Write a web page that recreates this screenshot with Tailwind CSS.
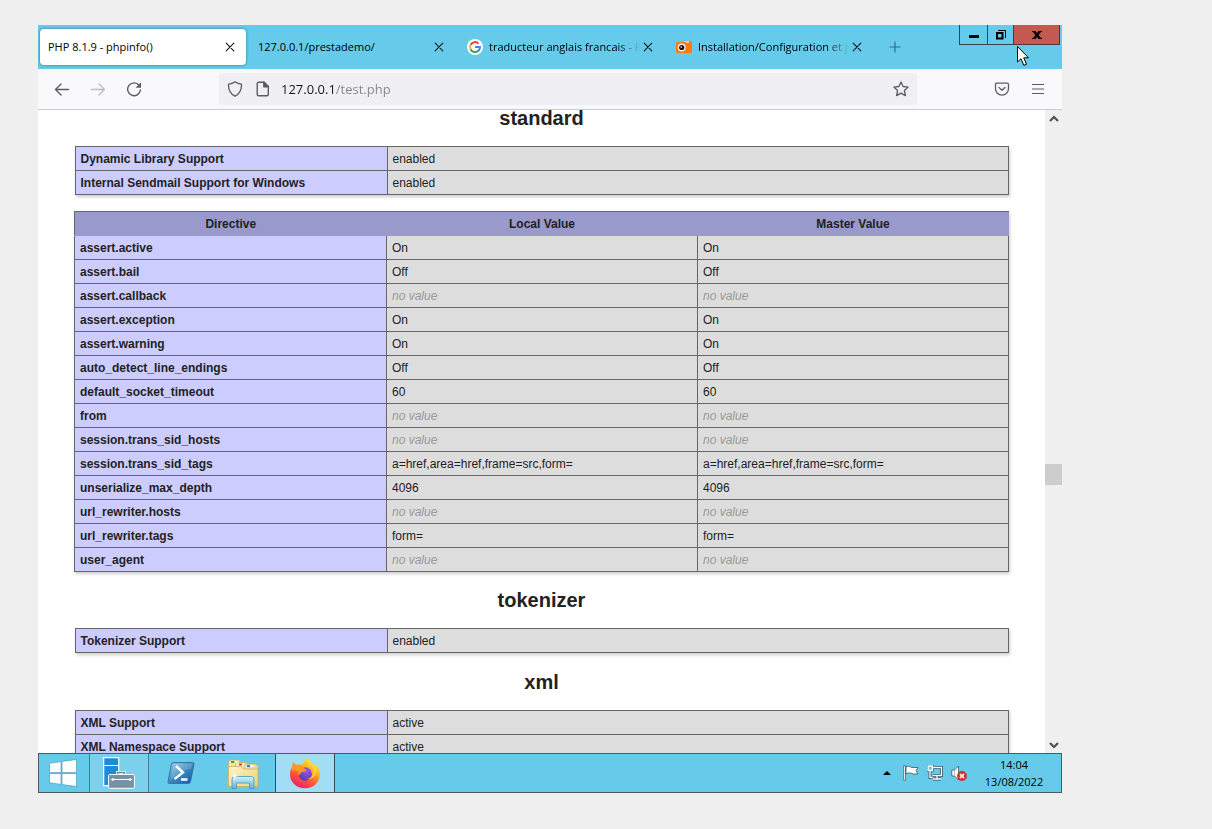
<!DOCTYPE html>
<html lang="en">
<head>
<meta charset="utf-8">
<title>PHP 8.1.9 - phpinfo()</title>
<script src="https://cdn.jsdelivr.net/npm/@tailwindcss/browser@4"></script>
</head>
<body class="bg-[#efefef] font-['Open_Sans',sans-serif]">
<div class="h-screen pl-[38px] pr-[150px] pt-[25px] pb-9">
<div class="relative flex h-full flex-col overflow-hidden bg-white">

  <!-- Tab strip -->
  <header class="flex h-11 shrink-0 items-start bg-[#66caea] pl-0.5 text-[11px] text-black">
    <div class="flex gap-1 pt-1" role="tablist">
      <div class="flex h-9 w-[206px] items-center rounded bg-white px-2 shadow-[0_0_3px_rgba(0,0,0,0.45)]">
        <button role="tab" aria-selected="true" class="min-w-0 flex-1 overflow-hidden whitespace-nowrap text-left">PHP 8.1.9 - phpinfo()</button>
        <button aria-label="Close tab" class="flex size-4 items-center justify-center"><svg class="size-2.5" viewBox="0 0 10 10" stroke="#15141a" stroke-width="1.1" stroke-linecap="round"><path d="M1.200 1.200l7.600 7.600M8.800 1.200l-7.600 7.600"/></svg></button>
      </div>
      <div class="flex h-9 w-[205px] items-center px-2">
        <button role="tab" class="min-w-0 flex-1 overflow-hidden whitespace-nowrap text-left">127.0.0.1/prestademo/</button>
        <button aria-label="Close tab" class="flex size-4 items-center justify-center"><svg class="size-2.5" viewBox="0 0 10 10" stroke="#15141a" stroke-width="1.1" stroke-linecap="round"><path d="M1.200 1.200l7.600 7.600M8.800 1.200l-7.600 7.600"/></svg></button>
      </div>
      <div class="flex h-9 w-[205px] items-center px-2">
        <svg class="mr-1.5 size-4 shrink-0" viewBox="0 0 16 16"><circle cx="8" cy="8" r="8" fill="#fff"/><g fill="none" stroke-width="2"><path d="M11.6 4.6A5 5 0 0 0 3.6 5.8" stroke="#ea4335"/><path d="M3.6 5.7a5 5 0 0 0 0 4.7" stroke="#fbbc05"/><path d="M3.5 10.2a5 5 0 0 0 7.8 1.6" stroke="#34a853"/><path d="M8 8h5a5 5 0 0 1-1.8 3.9" stroke="#4285f4"/></g></svg>
        <button role="tab" class="min-w-0 flex-1 overflow-hidden whitespace-nowrap text-left mask-r-from-85%">traducteur anglais francais - Recherche Google</button>
        <button aria-label="Close tab" class="flex size-4 items-center justify-center"><svg class="size-2.5" viewBox="0 0 10 10" stroke="#15141a" stroke-width="1.1" stroke-linecap="round"><path d="M1.200 1.200l7.600 7.600M8.800 1.200l-7.600 7.600"/></svg></button>
      </div>
      <div class="flex h-9 w-[205px] items-center px-2">
        <svg class="mr-1.5 size-4 shrink-0" viewBox="0 0 16 16"><path d="M1.500 3H9l.8-1h5l.7 1 .5 1v8.500q0 1.500-1.500 1.500h-13Q0 14 0 12.500v-8Q0 3 1.500 3z" fill="#ff7a0a"/><path d="M9.500 3h3.500" stroke="#fff" stroke-width="1.200"/><circle cx="5.700" cy="8.500" r="4" fill="#f3efe9"/><circle cx="5.700" cy="8.500" r="2.600" fill="#151515"/><circle cx="5.200" cy="8" r=".8" fill="#fff"/></svg>
        <button role="tab" class="min-w-0 flex-1 overflow-hidden whitespace-nowrap text-left mask-r-from-85%">Installation/Configuration et jeu</button>
        <button aria-label="Close tab" class="flex size-4 items-center justify-center"><svg class="size-2.5" viewBox="0 0 10 10" stroke="#15141a" stroke-width="1.1" stroke-linecap="round"><path d="M1.200 1.200l7.600 7.600M8.800 1.200l-7.600 7.600"/></svg></button>
      </div>
      <button aria-label="New tab" class="flex h-9 w-9 items-center justify-center"><svg class="size-3" viewBox="0 0 12 12" stroke="#3d6a7c" stroke-width="1.2"><path d="M6 .5v11M.5 6h11"/></svg></button>
    </div>
    <div class="ml-auto mr-0.5 flex">
      <button aria-label="Minimize" class="flex h-5 w-[29px] items-center justify-center border border-t-0 border-[#3a4246]"><svg class="h-5 w-3" viewBox="0 0 12 20"><path d="M1 10h10v3H1z"/></svg></button>
      <button aria-label="Restore" class="-ml-px flex h-5 w-[27px] items-center justify-center border border-t-0 border-[#3a4246]"><svg class="size-3" viewBox="0 0 12 12" fill="none" stroke="#000"><path d="M2 4h5.500v5.500H2z" stroke-width="2"/><path d="M3 1.500h7.500V9"/></svg></button>
      <button aria-label="Close" class="-ml-px flex h-5 w-[47px] items-center justify-center border border-t-0 border-[#5a3532] bg-[#c35a50]"><svg class="h-2 w-2.5" viewBox="0 0 10 8"><path d="M0 0h3.500L5 2l1.500-2H10v1H9L6.500 4 9 7h1v1H6.500L5 6 3.500 8H0V7h1l2.500-3L1 1H0z"/></svg></button>
    </div>
  </header>

  <!-- Navigation bar -->
  <nav class="flex h-[41px] shrink-0 items-center border-b border-[#cccccc] bg-[#f9f9fb] px-1.5">
    <button aria-label="Back" class="flex size-9 items-center justify-center"><svg class="size-4" viewBox="0 0 16 16" fill="none" stroke="#5b5b66" stroke-width="1.4" stroke-linecap="round" stroke-linejoin="round"><path d="M14.500 8.500H1.500M7 3L1.500 8.500 7 14"/></svg></button>
    <button aria-label="Forward" class="flex size-9 items-center justify-center"><svg class="size-4" viewBox="0 0 16 16" fill="none" stroke="#bdbdc2" stroke-width="1.4" stroke-linecap="round" stroke-linejoin="round"><path d="M1.500 8.500h13M9 3l5.500 5.500L9 14"/></svg></button>
    <button aria-label="Reload" class="flex size-9 items-center justify-center"><svg class="size-4" viewBox="0 0 16 16" fill="none" stroke="#5b5b66" stroke-width="1.400" stroke-linecap="round"><path d="M13.200 4.500A6.400 6.400 0 1 0 14.400 9"/><path d="M15 1.300v5.400H9.600z" fill="#5b5b66" stroke="none"/></svg></button>
    <div class="mx-[67px] flex h-8 flex-1 items-center rounded bg-[#f0f0f4] px-2">
      <svg class="size-4 shrink-0" viewBox="0 0 16 16" fill="none" stroke="#5b5b66" stroke-width="1.3" stroke-linejoin="round"><path d="M8 .8c1.800 1.500 4 2.200 6.500 2.400.2 5.300-1.500 9.500-6.500 12C3 12.700 1.300 8.500 1.500 3.200 4 3 6.200 2.300 8 .8z"/></svg>
      <svg class="ml-3 size-4 shrink-0" viewBox="0 0 16 16" fill="none" stroke="#5b5b66" stroke-width="1.400" stroke-linejoin="round"><path d="M3.700 1.200H9l4.300 4.300v7.800a1.500 1.500 0 0 1-1.500 1.500H3.700a1.500 1.500 0 0 1-1.500-1.500V2.700a1.500 1.500 0 0 1 1.500-1.500z"/><path d="M8.800 1l4.700 4.700H8.800z" fill="#5b5b66"/></svg>
      <input aria-label="Address" value="127.0.0.1/test.php" class="ml-2.5 min-w-0 flex-1 bg-linear-to-r from-[#15141a] from-[55px] to-[#85858c] to-[55px] bg-clip-text pt-0.5 text-[13px] text-transparent outline-none">
      <button aria-label="Bookmark" class="flex size-4 items-center justify-center"><svg class="size-4" viewBox="0 0 16 16" fill="none" stroke="#5b5b66" stroke-width="1.300" stroke-linejoin="round"><path d="M8 .9l2.100 4.600 5 .6-3.700 3.400 1 5.100L8 12.100l-4.400 2.500 1-5.100L.9 6.100l5-.6z"/></svg></button>
    </div>
    <button aria-label="Save to Pocket" class="flex size-9 items-center justify-center"><svg class="size-4" viewBox="0 0 16 16" fill="none" stroke="#5b5b66" stroke-width="1.300" stroke-linecap="round" stroke-linejoin="round"><path d="M2.800 2.200h10.400q1.300 0 1.300 1.300v4.200a6.500 6.500 0 0 1-13 0V3.500q0-1.300 1.300-1.300z"/><path d="M5 6.500l3 2.700 3-2.700"/></svg></button>
    <button aria-label="Menu" class="flex size-9 items-center justify-center"><svg class="size-4" viewBox="0 0 16 16" stroke="#5b5b66" stroke-width="1.200"><path d="M2 3.500h12M2 8h12M2 12.500h12"/></svg></button>
  </nav>

  <!-- Page and scrollbar -->
  <div class="flex min-h-0 flex-1">
    <main class="min-w-0 flex-1 overflow-hidden px-9 font-['Liberation_Sans',Arial,sans-serif] text-[#222222] [&_h2]:text-center [&_h2]:text-xl [&_h2]:leading-6 [&_h2]:font-bold [&_table]:mx-auto [&_table]:w-[934px] [&_table]:max-w-full [&_table]:table-fixed [&_table]:border-collapse [&_table]:text-xs [&_table]:leading-[15px] [&_table]:shadow-[1px_2px_3px_rgba(0,0,0,0.2)] [&_td]:border [&_td]:border-[#666666] [&_td]:bg-[#dddddd] [&_td]:px-[5px] [&_td]:pt-[5px] [&_td]:pb-[3px] [&_tbody_th]:w-[312px] [&_tbody_th]:border [&_tbody_th]:border-[#666666] [&_tbody_th]:bg-[#ccccff] [&_tbody_th]:px-[5px] [&_tbody_th]:pt-[5px] [&_tbody_th]:pb-[3px] [&_tbody_th]:text-left [&_i]:text-[#999999]">
      <h2 class="-mt-1 mb-4">standard</h2>
      <table>
        <tbody>
          <tr><th scope="row">Dynamic Library Support</th><td>enabled</td></tr>
          <tr><th scope="row">Internal Sendmail Support for Windows</th><td>enabled</td></tr>
        </tbody>
      </table>
      <table class="mt-4 [&_thead_th]:w-[311px] [&_thead_th]:border-y [&_thead_th]:border-[#9999cc] [&_thead_th]:border-t-[#666666] [&_thead_th]:bg-[#9999cc] [&_thead_th]:px-[5px] [&_thead_th]:pt-[5px] [&_thead_th]:pb-[3px] [&_thead_th:first-child]:w-[312px] [&_thead_th:first-child]:border-l [&_thead_th:first-child]:border-l-[#666666]">
        <thead>
          <tr><th scope="col">Directive</th><th scope="col">Local Value</th><th scope="col">Master Value</th></tr>
        </thead>
        <tbody>
          <tr><th scope="row">assert.active</th><td>On</td><td>On</td></tr>
          <tr><th scope="row">assert.bail</th><td>Off</td><td>Off</td></tr>
          <tr><th scope="row">assert.callback</th><td><i>no value</i></td><td><i>no value</i></td></tr>
          <tr><th scope="row">assert.exception</th><td>On</td><td>On</td></tr>
          <tr><th scope="row">assert.warning</th><td>On</td><td>On</td></tr>
          <tr><th scope="row">auto_detect_line_endings</th><td>Off</td><td>Off</td></tr>
          <tr><th scope="row">default_socket_timeout</th><td>60</td><td>60</td></tr>
          <tr><th scope="row">from</th><td><i>no value</i></td><td><i>no value</i></td></tr>
          <tr><th scope="row">session.trans_sid_hosts</th><td><i>no value</i></td><td><i>no value</i></td></tr>
          <tr><th scope="row">session.trans_sid_tags</th><td>a=href,area=href,frame=src,form=</td><td>a=href,area=href,frame=src,form=</td></tr>
          <tr><th scope="row">unserialize_max_depth</th><td>4096</td><td>4096</td></tr>
          <tr><th scope="row">url_rewriter.hosts</th><td><i>no value</i></td><td><i>no value</i></td></tr>
          <tr><th scope="row">url_rewriter.tags</th><td>form=</td><td>form=</td></tr>
          <tr><th scope="row">user_agent</th><td><i>no value</i></td><td><i>no value</i></td></tr>
        </tbody>
      </table>
      <h2 class="my-4">tokenizer</h2>
      <table>
        <tbody>
          <tr><th scope="row">Tokenizer Support</th><td>enabled</td></tr>
        </tbody>
      </table>
      <h2 class="mt-[17px] mb-4">xml</h2>
      <table>
        <tbody>
          <tr><th scope="row">XML Support</th><td>active</td></tr>
          <tr><th scope="row">XML Namespace Support</th><td>active</td></tr>
        </tbody>
      </table>
    </main>
    <div class="flex w-[17px] shrink-0 flex-col bg-[#f0f0f0]">
      <button aria-label="Scroll up" class="flex h-[17px] items-center justify-center"><svg class="h-2 w-2.5" viewBox="0 0 10 8" fill="none" stroke="#505050" stroke-width="2.200"><path d="M1 6l4-4 4 4"/></svg></button>
      <div class="flex-[337]"></div>
      <div class="h-[21px] bg-[#cdcdcd]"></div>
      <div class="flex-[251]"></div>
      <button aria-label="Scroll down" class="flex h-[17px] items-center justify-center"><svg class="h-2 w-2.5" viewBox="0 0 10 8" fill="none" stroke="#505050" stroke-width="2.200"><path d="M1 2l4 4 4-4"/></svg></button>
    </div>
  </div>

  <!-- Taskbar -->
  <footer class="flex h-10 shrink-0 items-stretch border border-[#4b5a61] bg-[#66caea] text-black">
    <button aria-label="Start" class="flex w-[51px] items-center justify-center border-r border-[#3f7f96] pr-0.5">
      <svg class="size-7" viewBox="0 0 28 28" fill="#fff" stroke="#4a9dba" stroke-width=".7"><path d="M.5 4.300L12 2.600v11H.5zM13 2.400L27.500.5v13.100H13zM.5 14.600H12v10.800L.5 23.700zM13 14.600h14.500v12.900L13 25.600z"/></svg>
    </button>
    <button aria-label="Server Manager" class="flex w-[59px] items-center justify-center border-r border-[#3f7f96] bg-[#7bd0ec]">
      <svg class="h-8 w-8" viewBox="0 0 32 32"><path d="M.7.7h15v28H.7z" fill="#1e8ad8" stroke="#fff" stroke-width="1.200"/><path d="M1 8.500h14.500" stroke="#fff"/><path d="M14.500 17v-1.500h7V17" fill="none" stroke="#fff" stroke-width="3"/><path d="M14.500 17v-1.500h7V17" fill="none" stroke="#6d8598" stroke-width="1.500"/><rect x="5.600" y="17.500" width="25.800" height="13.800" rx="1" fill="#7790a5" stroke="#fff"/><path d="M8 22.500h21" stroke="#fff"/><path d="M10 21l2 1.500-2 1.500-2-1.500zM27 21l2 1.500-2 1.500-2-1.500z" fill="#fff"/></svg>
    </button>
    <button aria-label="Windows PowerShell" class="flex w-[63px] items-center justify-center">
      <svg class="h-6 w-7" viewBox="0 0 28 24"><defs><linearGradient id="ps" x1="0" y1="0" x2="1" y2="1"><stop offset="0" stop-color="#9accE6"/><stop offset=".45" stop-color="#3f8ec4"/><stop offset="1" stop-color="#1a54a6"/></linearGradient></defs><path d="M6.500 1.500h19q1.800 0 1.500 1.800l-3.500 17.400q-.4 1.800-2.200 1.800h-19Q.7 22.500 1 20.700L4.300 3.300Q4.700 1.500 6.500 1.500z" fill="url(#ps)" stroke="#2a69a0" stroke-width=".8"/><path d="M6.700 2.500h18.500l-1 5Q14 9 3.500 19z" fill="#fff" opacity=".18"/><path d="M9 5l7 6.500L7.500 18M14 18.500h6.500" fill="none" stroke="#fff" stroke-width="2.400"/></svg>
    </button>
    <button aria-label="File Explorer" class="flex w-[63px] items-center justify-center pr-0.5 pt-0.5">
      <svg class="h-8 w-8" viewBox="0 0 32 32"><defs><linearGradient id="fo" x1="0" y1="0" x2="1" y2="1"><stop offset="0" stop-color="#fff4c4"/><stop offset="1" stop-color="#ecd07c"/></linearGradient><linearGradient id="st" x1="0" y1="0" x2="0" y2="1"><stop offset="0" stop-color="#d5f2fc"/><stop offset="1" stop-color="#59b4dd"/></linearGradient></defs><path d="M1.500 28V4l1.500-2h9l1.500 2v24z" fill="#f5e3a4" stroke="#c9ae62" stroke-width=".7"/><path d="M8.500 28V6.500L10 4.500h9l1.500 2V28z" fill="#f7e5ae" stroke="#c9ae62" stroke-width=".7"/><path d="M17 28V8l1.500-2h10L31 8v20z" fill="#f1da98" stroke="#c9ae62" stroke-width=".7"/><path d="M3.500 3h7v2h-7zM11 5.500h6v2h-6zM19.500 7h7v2h-7z" fill="#fff"/><path d="M4 3h3.500v2H4z" fill="#24b42d"/><path d="M12 5.500h3v2h-3z" fill="#d43b23"/><path d="M20 7h3v2h-3z" fill="#238cd8"/><path d="M1.500 8.500h12l3 2.500h14.500v17.500H1.500z" fill="url(#fo)" stroke="#c9ae62" stroke-width=".7"/><path d="M5 30.500V21q0-2.500 2.500-2.500h17Q27 18.500 27 21v9.500h-4.500V25h-13v5.500z" fill="url(#st)" stroke="#4697bd" stroke-width=".8"/><path d="M7.500 13l.8 4.200L12 18l-3.700.8-.8 4.200-.8-4.200L3 18l3.700-.8z" fill="#fff" opacity=".9"/></svg>
    </button>
    <button aria-label="Firefox" class="flex w-[60px] items-center justify-center border-x border-[#2f4f5c] bg-[#a1ddf3]">
      <svg class="size-8" viewBox="0 0 32 32"><defs><linearGradient id="ff" x1=".8" y1="0" x2=".25" y2="1"><stop offset="0" stop-color="#fff04a"/><stop offset=".35" stop-color="#ffb423"/><stop offset=".65" stop-color="#ff5837"/><stop offset="1" stop-color="#f5156c"/></linearGradient><radialGradient id="fp" cx=".6" cy=".25" r=".8"><stop offset="0" stop-color="#a751f0"/><stop offset="1" stop-color="#4f38ad"/></radialGradient></defs><path d="M17.500 1c3 1.500 4.500 4 5.500 6 .8.300 1.600 1 2 1.800l.2-1.800C29 9.500 31 13.500 31 17c0 8-6.500 14.300-15 14.300S1 25.300 1 17.500c0-3.500 1-6 2.500-8L4 5l3 3c1.500-.7 3-.8 4.500-.3 2-.8 3-1.700 4-3.200.5-1.200 1-2.300 2-3.500z" fill="url(#ff)"/><circle cx="16.200" cy="17" r="6.700" fill="url(#fp)"/><path d="M2.500 13L4 5l3.200 3.200c2.500-1 5-.2 7 1.800 1.200 1.500 2.300 2.500 3.300 3-.5 1.500-2.500 1.800-4.500 2-1.500 1-2 2.200-3 3.500-1-1.500-1-3-.2-4.500z" fill="#ff9825"/><path d="M17.500 1c0 5 7 7 7 13 0 5-3.500 8-8 8 7 1 11-3.500 11-8.500 0-4-2-6.500-4.500-6.500-1-2-2.500-4.500-5.500-6z" fill="#ffdc3d" opacity=".75"/></svg>
    </button>
    <div class="ml-auto flex items-center">
      <button aria-label="Show hidden icons" class="flex size-6 items-center justify-center"><svg class="h-1 w-2" viewBox="0 0 8 4"><path d="M0 4l4-4 4 4z"/></svg></button>
      <button aria-label="Action Center" class="flex size-6 items-center justify-center"><svg class="size-4" viewBox="0 0 16 16"><path d="M.7.700h1.800V15.300H.7z" fill="#fff" stroke="#3b545e" stroke-width=".7"/><path d="M3 1.800c2-.8 3.500-.8 5.500.7h6.500l-2 3.300 2 3.200h-5C7.500 7.500 5 7.800 3 8.800z" fill="#fff" stroke="#3b545e" stroke-width=".8"/></svg></button>
      <button aria-label="Network" class="flex size-6 items-center justify-center"><svg class="size-4" viewBox="0 0 16 16" fill="none"><path d="M5.500 2.500h9v8h-9M10 10.500v3M6 14h8M3 6v6.500h3" stroke="#304d59" stroke-width="2.800"/><path d="M1 1h4.500v4.500H1z" stroke="#304d59" stroke-width="2.600"/><path d="M5.500 2.500h9v8h-9M10 10.500v3M6 14h8M3 6v6.500h3" stroke="#fff" stroke-width="1.300"/><path d="M1 1h4.500v4.500H1z" fill="#66caea" stroke="#fff" stroke-width="1.300"/></svg></button>
      <button aria-label="Volume muted" class="flex size-6 items-center justify-center"><svg class="size-4" viewBox="0 0 16 16"><path d="M.8 5h2.700l4-4v14l-4-4H.8z" fill="#fff" stroke="#3b545e" stroke-width=".8"/><path d="M3.500 5v6" stroke="#8aa5b0" stroke-width=".7"/><circle cx="11" cy="11" r="4.700" fill="#de2f2c" stroke="#b32322" stroke-width=".5"/><path d="M9 9l4 4M13 9l-4 4" stroke="#fff" stroke-width="1.600"/></svg></button>
      <div class="w-[90px] pr-1 text-center text-[11px] leading-[17px]"><time class="block">14:04</time><time class="block">13/08/2022</time></div>
    </div>
  </footer>

  <!-- Mouse pointer -->
  <svg class="pointer-events-none absolute top-5 right-[33px] h-[22px] w-3" viewBox="0 0 12 22" fill="#fff" stroke="#000"><path d="M.5 1.500v15.500l3.500-3.300 2.800 6.600 2.700-1-2.800-6.500h4.800z"/></svg>
</div>
</div>
</body>
</html>
